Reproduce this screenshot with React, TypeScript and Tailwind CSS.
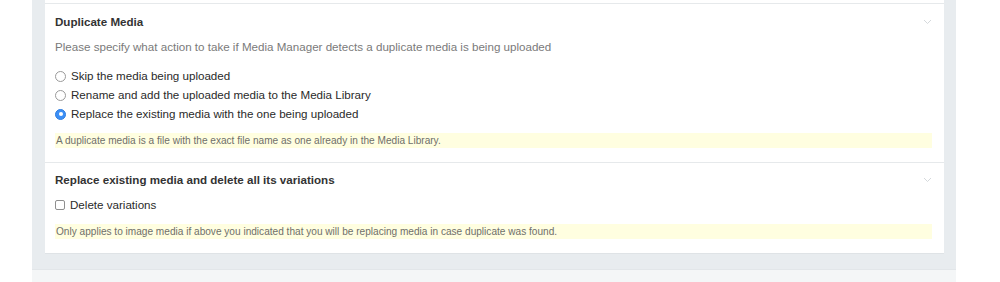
import React from "react";

function Chevron() {
  return (
    <svg width="9" height="6" viewBox="0 0 9 6" className="mt-[4px]">
      <path d="M1 1l3.5 3.5L8 1" fill="none" stroke="#d5d9dc" strokeWidth="1" />
    </svg>
  );
}

function Radio({ checked }: { checked?: boolean }) {
  return checked ? (
    <span className="w-[11px] h-[11px] rounded-full bg-[#3b8ff6] border border-[#2f7ee0] flex items-center justify-center shrink-0">
      <span className="w-[4px] h-[4px] rounded-full bg-white" />
    </span>
  ) : (
    <span className="w-[11px] h-[11px] rounded-full bg-white border border-[#9a9a9a] shrink-0" />
  );
}

export default function App() {
  return (
    <div
      className="w-[1000px] h-[282px] bg-white overflow-hidden"
      style={{ fontFamily: '"Liberation Sans", Arial, sans-serif' }}
    >
      <div className="ml-[32px] w-[924px] h-[282px] bg-[#e8ecef] flex flex-col">
        <div className="ml-[13px] w-[899px] bg-white border-b border-[#dfe3e6]">
          <div className="h-[3px]" />
          <section className="border-t border-[#e6e9eb] pt-[11px] pb-[14px] pl-[10px] pr-[12px]">
            <div className="flex justify-between items-start">
              <h3 className="text-[11.6px] font-bold text-[#333] leading-[14px]">Duplicate Media</h3>
              <Chevron />
            </div>
            <p className="mt-[11px] text-[11.6px] text-[#7a7a7a] leading-[14px]">
              Please specify what action to take if Media Manager detects a duplicate media is being uploaded
            </p>
            <div className="mt-[15px] flex flex-col gap-[5px]">
              <label className="h-[14px] flex items-center gap-[5px] text-[11.6px] text-[#2a2a2a] leading-[14px]">
                <Radio />
                Skip the media being uploaded
              </label>
              <label className="h-[14px] flex items-center gap-[5px] text-[11.6px] text-[#2a2a2a] leading-[14px]">
                <Radio />
                Rename and add the uploaded media to the Media Library
              </label>
              <label className="h-[14px] flex items-center gap-[5px] text-[11.6px] text-[#2a2a2a] leading-[14px]">
                <Radio checked />
                Replace the existing media with the one being uploaded
              </label>
            </div>
            <div className="mt-[12px] bg-[#fffee0] h-[15px] flex items-center px-[1px] text-[10.1px] text-[#6f6f6a]">
              A duplicate media is a file with the exact file name as one already in the Media Library.
            </div>
          </section>
          <section className="border-t border-[#e6e9eb] pt-[10px] pb-[14px] pl-[10px] pr-[12px]">
            <div className="flex justify-between items-start">
              <h3 className="text-[11.6px] font-bold text-[#333] leading-[14px]">
                Replace existing media and delete all its variations
              </h3>
              <Chevron />
            </div>
            <label className="mt-[11px] h-[14px] flex items-center gap-[5px] text-[11.6px] text-[#2a2a2a] leading-[14px]">
              <span className="w-[10px] h-[10px] rounded-[2px] bg-white border border-[#8f8f8f] shrink-0" />
              Delete variations
            </label>
            <div className="mt-[12px] bg-[#fffee0] h-[15px] flex items-center px-[1px] text-[10.1px] text-[#6f6f6a]">
              Only applies to image media if above you indicated that you will be replacing media in case duplicate was found.
            </div>
          </section>
        </div>
        <div className="h-[15px]" />
        <div className="flex-1 bg-[#f4f6f7] border-t border-[#e2e6e9]" />
      </div>
    </div>
  );
}
